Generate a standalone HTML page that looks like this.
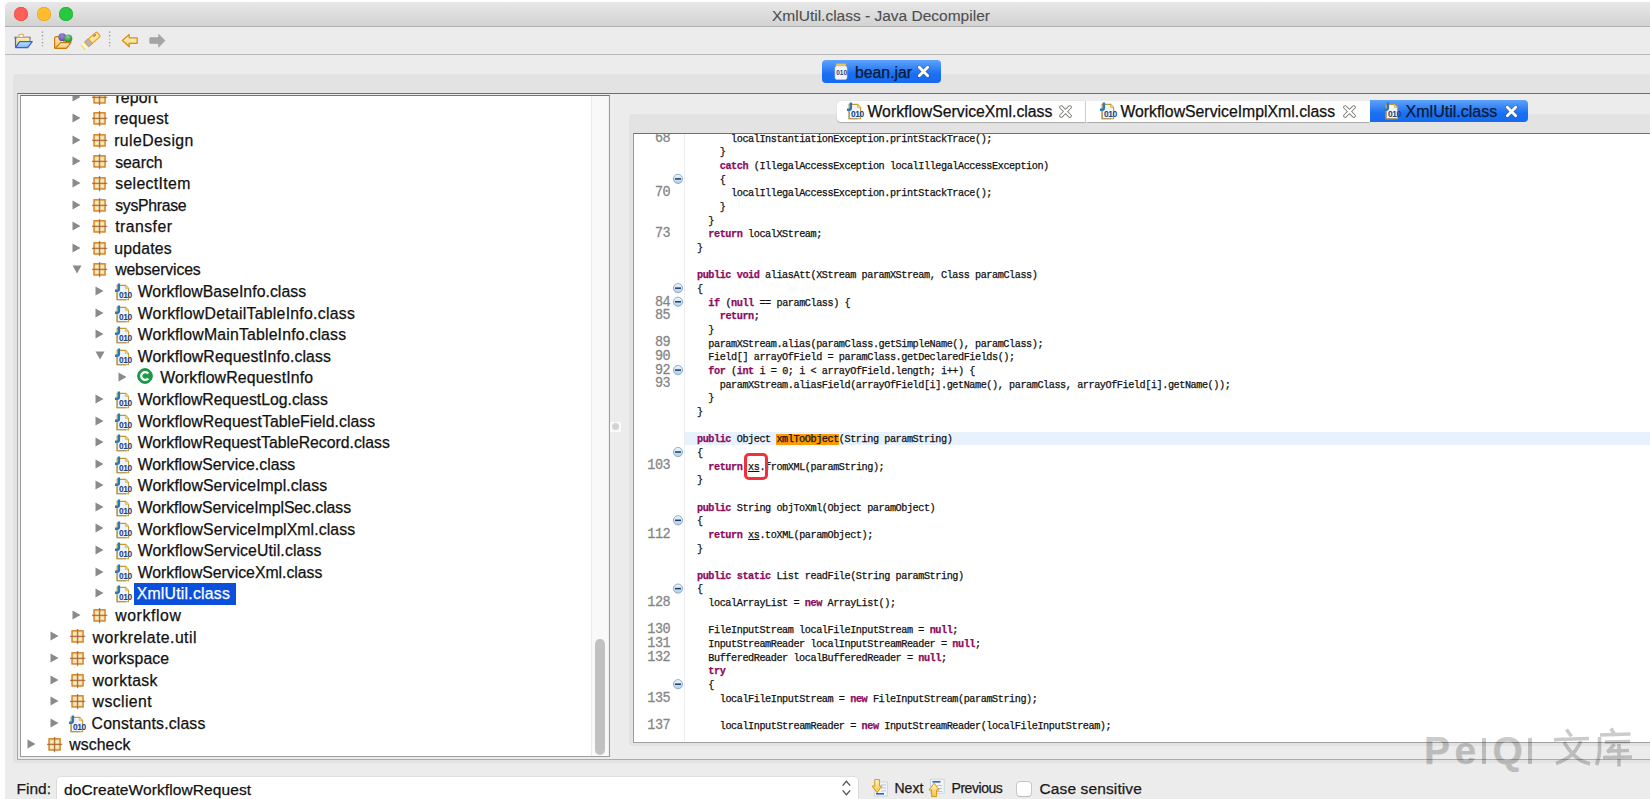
<!DOCTYPE html><html><head><meta charset="utf-8"><title>XmlUtil.class - Java Decompiler</title><style>
*{margin:0;padding:0;box-sizing:border-box}
html,body{width:1650px;height:799px;overflow:hidden;background:#fff}
body{position:relative;font-family:"Liberation Sans",sans-serif}
.ab{position:absolute}
.t{position:absolute;white-space:pre;line-height:1;-webkit-text-stroke:0.25px currentColor}

.cd{font-family:"Liberation Mono",monospace;font-size:10.2px;letter-spacing:-0.44px;color:#111}
.cd b{color:#8e0a60;font-weight:bold}
.cd u{text-decoration:underline}
.hl{background:#fe9a05}
.ln{font-family:"Liberation Mono",monospace;font-size:13.5px;letter-spacing:-0.55px;color:#858585;-webkit-text-stroke:0.25px #858585;transform:scaleY(1.1);transform-origin:50% 50%}
</style></head><body><svg width="0" height="0" style="position:absolute"><defs><linearGradient id="fg" x1="0" y1="0" x2="0" y2="1"><stop offset="0" stop-color="#f2f7fc"/><stop offset="1" stop-color="#aecde9"/></linearGradient></defs></svg><div class="ab" style="left:5px;top:2px;width:1700px;height:820px;background:#ececec;border-radius:5px 0 0 0"></div><div class="ab" style="left:5px;top:2px;width:1700px;height:25px;background:linear-gradient(#e8e8e8,#d2d2d2);border-radius:5px 0 0 0;border-bottom:1px solid #b0b0b0"></div><div class="ab" style="left:14px;top:7.3px;width:14px;height:14px;border-radius:50%;background:#fe5f57;box-shadow:inset 0 0 0 0.5px #e2463f"></div><div class="ab" style="left:36.5px;top:7.3px;width:14px;height:14px;border-radius:50%;background:#febc2e;box-shadow:inset 0 0 0 0.5px #e1a116"></div><div class="ab" style="left:59.400000000000006px;top:7.3px;width:14px;height:14px;border-radius:50%;background:#28c840;box-shadow:inset 0 0 0 0.5px #14ae2b"></div><div class="t" style="left:772px;top:7.5px;font-size:15.5px;color:#4d4d4d;-webkit-text-stroke:0.1px #4d4d4d">XmlUtil.class - Java Decompiler</div><div class="ab" style="left:5px;top:54px;width:1700px;height:1px;background:#b8b8b8"></div><svg class="ab" style="left:0;top:26px" width="180" height="28" viewBox="0 26 180 28">
<defs>
<linearGradient id="fy" x1="0" y1="0" x2="0" y2="1"><stop offset="0" stop-color="#fff3c4"/><stop offset="1" stop-color="#f5c550"/></linearGradient>
<linearGradient id="fb" x1="0" y1="0" x2="0" y2="1"><stop offset="0" stop-color="#b2ebff"/><stop offset="1" stop-color="#86b4f2"/></linearGradient>
<linearGradient id="fo" x1="0" y1="0" x2="0" y2="1"><stop offset="0" stop-color="#fff0b8"/><stop offset="1" stop-color="#f3c262"/></linearGradient>
<linearGradient id="ay" x1="0" y1="0" x2="0" y2="1"><stop offset="0" stop-color="#fffbe6"/><stop offset="1" stop-color="#f7cf62"/></linearGradient>
<radialGradient id="bp" cx="0.45" cy="0.35" r="0.7"><stop offset="0" stop-color="#9f8ad8"/><stop offset="1" stop-color="#5f45a8"/></radialGradient>
<radialGradient id="bg" cx="0.45" cy="0.3" r="0.7"><stop offset="0" stop-color="#8fd08a"/><stop offset="1" stop-color="#0f8a35"/></radialGradient>
<linearGradient id="fl" x1="0" y1="0" x2="1" y2="0"><stop offset="0" stop-color="#f7d040"/><stop offset="0.5" stop-color="#ffffff"/><stop offset="1" stop-color="#f4d040"/></linearGradient>
</defs>
<!-- open folder -->
<path d="M14.3 36.6 H30.8 V38.6 H14.3 Z" fill="#a48894"/>
<path d="M19.1 36.8 V35.2 Q19.1 34.3 20 34.3 H22.4 Q23.3 34.3 23.3 35.2 V36.8" fill="#fff" stroke="#dba55a" stroke-width="1.1"/>
<path d="M15.6 37.6 V46.8" fill="none" stroke="#4a63c8" stroke-width="1.4"/>
<path d="M29.9 37.6 V41.6" fill="none" stroke="#6f7fc8" stroke-width="1.2"/>
<path d="M16.6 37.8 H29.2 V41.6 H19.6 L16.4 45.6 Z" fill="url(#fy)"/>
<path d="M19.7 41.6 H32.2 L27.6 47.6 H15.6 Z" fill="url(#fb)" stroke="#3e5fcc" stroke-width="1.3" stroke-linejoin="round"/>
<!-- separator -->
<g fill="#8e8e8e"><rect x="41.8" y="31.5" width="1.4" height="1.2"/><rect x="41.8" y="35" width="1.4" height="1.2"/><rect x="41.8" y="38.5" width="1.4" height="1.2" opacity="0.6"/><rect x="41.8" y="42" width="1.4" height="1.2"/><rect x="41.8" y="45.2" width="1.4" height="1.2" opacity="0.7"/></g>
<g fill="#8e8e8e"><rect x="108.9" y="31.5" width="1.4" height="1.2"/><rect x="108.9" y="35" width="1.4" height="1.2"/><rect x="108.9" y="38.5" width="1.4" height="1.2" opacity="0.6"/><rect x="108.9" y="42" width="1.4" height="1.2"/><rect x="108.9" y="45.2" width="1.4" height="1.2" opacity="0.7"/></g>
<!-- folder with balls -->
<path d="M54.6 48.2 V38.5 Q54.6 36.6 56.5 36.6 H58.5 L60 38 H64 V42.5" fill="url(#fo)" stroke="#c9790e" stroke-width="1.2"/>
<circle cx="62.3" cy="37.2" r="3.9" fill="url(#bp)"/>
<circle cx="68.2" cy="38.6" r="4.1" fill="url(#bg)"/>
<path d="M60.6 42.6 H71 L66.3 48.4 H55 Z" fill="url(#fo)" stroke="#c9790e" stroke-width="1.2" stroke-linejoin="round"/>
<!-- flashlight -->
<g transform="translate(90.5 41) rotate(-41) scale(0.84 0.8) translate(-90.5 -41)">
<rect x="78.2" y="37" width="6.6" height="8" fill="url(#fl)"/>
<path d="M84.6 37 H90.3 V45 H84.6 Z" fill="#b9b2bc" stroke="#a08c6c" stroke-width="0.9"/>
<path d="M90.3 37.3 H101.5 Q103.2 37.3 103.2 39 V43 Q103.2 44.7 101.5 44.7 H90.3 Z" fill="#fbe596" stroke="#f0a018" stroke-width="1.5"/>
<circle cx="97.5" cy="39.2" r="0.85" fill="#2f5ab0"/><circle cx="99.3" cy="39.2" r="0.85" fill="#2f5ab0"/>
</g>
<!-- back arrow -->
<path d="M122.4 40.6 L129.2 34.6 V37.8 H137.2 V43.3 H129.2 V46.8 Z" fill="url(#ay)" stroke="#d88f10" stroke-width="1.3" stroke-linejoin="round"/>
<!-- forward arrow -->
<path d="M165 40.6 L158.6 34.2 V37.6 H151 Q149.6 37.6 149.6 39 V42.2 Q149.6 43.6 151 43.6 H158.6 V47.2 Z" fill="#a4a4a4" stroke="#a0a0a0" stroke-width="0.6" stroke-linejoin="round"/>
</svg><div class="ab" style="left:14px;top:74.2px;width:1700px;height:687.8px;background:#e3e3e3;border-radius:4px 4px 3px 3px;box-shadow:-0.5px 0 0 0 #d8d8d8, 0 0.5px 0 0 #d8d8d8"></div><div class="ab" style="left:17.4px;top:93px;width:1700px;height:666.5px;background:#ececec;border-top:1.3px solid #6e6e6e;border-left:1px solid #a8a8a8;border-bottom:1.5px solid #acacac"></div><div class="ab" style="left:822px;top:60px;width:119px;height:23px;border-radius:4px;background:linear-gradient(#5ea3fb,#1b6ff2 60%,#166af0)"></div><svg class="ab" style="left:834px;top:62px" width="14" height="19" viewBox="0 0 14 19">
<rect x="2" y="1.5" width="10" height="2.5" fill="#e8c860" stroke="#c8a040" stroke-width="0.6"/>
<rect x="1" y="4" width="12" height="13.5" rx="2" fill="#f4f6fb" stroke="#c9c9c9" stroke-width="0.6"/>
<text x="2.2" y="13.2" font-family="Liberation Sans" font-size="6.5" font-weight="bold" fill="#1f3f80">010</text>
</svg><div class="t" style="left:855px;top:64.5px;font-size:15.8px;color:#081a36">bean.jar</div><svg class="ab" style="left:917px;top:65px" width="13" height="13" viewBox="0 0 13 13"><path d="M2.3 2.3 L10.7 10.7 M10.7 2.3 L2.3 10.7" stroke="#3b4a66" stroke-width="4.1" stroke-linecap="round" opacity="0.5"/><path d="M2.3 2.3 L10.7 10.7 M10.7 2.3 L2.3 10.7" stroke="#fff" stroke-width="2.8" stroke-linecap="round"/></svg><div class="ab" style="left:20px;top:95px;width:590px;height:662.3px;background:#fff;border:1px solid #9c9c9c;border-top:1.3px solid #747474"></div><div class="ab" style="left:591px;top:96.3px;width:17.5px;height:660px;background:#f9f9f9;border-left:1px solid #ebebeb;border-right:1px solid #f0f0f0"></div><div class="ab" style="left:595px;top:639px;width:9.5px;height:116px;border-radius:5px;background:#c1c1c1"></div><div class="ab" style="left:21px;top:96px;width:570px;height:661px;overflow:hidden" id="tree"><svg class="ab" style="left:51.4px;top:-4.4px" width="9" height="10" viewBox="0 0 9 10"><path d="M0.5 0.5 L8.5 5 L0.5 9.5 Z" fill="#8a8a8a"/></svg><svg class="ab" style="left:71.4px;top:-6.4px" width="16" height="16" viewBox="0 0 16 16">
<rect x="2" y="1.8" width="11.1" height="11.2" fill="#f3d7a8" stroke="#d27a16" stroke-width="1.3"/>
<g fill="#fcefb6" opacity="0.95"><circle cx="4.9" cy="4.8" r="1.6"/><circle cx="10.2" cy="4.8" r="1.6"/><circle cx="4.9" cy="10" r="1.6"/><circle cx="10.2" cy="10" r="1.6"/></g>
<line x1="7.55" y1="0" x2="7.55" y2="15.2" stroke="#9a5a30" stroke-width="1.3" opacity="0.75"/>
<line x1="0" y1="7.4" x2="15.3" y2="7.4" stroke="#9a5a30" stroke-width="1.3" opacity="0.75"/>
</svg><div class="t" style="left:94.40px;top:-6.3px;font-size:15.8px;letter-spacing:0.200px;color:#111">report</div><svg class="ab" style="left:51.4px;top:17.2px" width="9" height="10" viewBox="0 0 9 10"><path d="M0.5 0.5 L8.5 5 L0.5 9.5 Z" fill="#8a8a8a"/></svg><svg class="ab" style="left:71.4px;top:15.2px" width="16" height="16" viewBox="0 0 16 16">
<rect x="2" y="1.8" width="11.1" height="11.2" fill="#f3d7a8" stroke="#d27a16" stroke-width="1.3"/>
<g fill="#fcefb6" opacity="0.95"><circle cx="4.9" cy="4.8" r="1.6"/><circle cx="10.2" cy="4.8" r="1.6"/><circle cx="4.9" cy="10" r="1.6"/><circle cx="10.2" cy="10" r="1.6"/></g>
<line x1="7.55" y1="0" x2="7.55" y2="15.2" stroke="#9a5a30" stroke-width="1.3" opacity="0.75"/>
<line x1="0" y1="7.4" x2="15.3" y2="7.4" stroke="#9a5a30" stroke-width="1.3" opacity="0.75"/>
</svg><div class="t" style="left:93.20px;top:15.3px;font-size:15.8px;letter-spacing:0.267px;color:#111">request</div><svg class="ab" style="left:51.4px;top:38.8px" width="9" height="10" viewBox="0 0 9 10"><path d="M0.5 0.5 L8.5 5 L0.5 9.5 Z" fill="#8a8a8a"/></svg><svg class="ab" style="left:71.4px;top:36.8px" width="16" height="16" viewBox="0 0 16 16">
<rect x="2" y="1.8" width="11.1" height="11.2" fill="#f3d7a8" stroke="#d27a16" stroke-width="1.3"/>
<g fill="#fcefb6" opacity="0.95"><circle cx="4.9" cy="4.8" r="1.6"/><circle cx="10.2" cy="4.8" r="1.6"/><circle cx="4.9" cy="10" r="1.6"/><circle cx="10.2" cy="10" r="1.6"/></g>
<line x1="7.55" y1="0" x2="7.55" y2="15.2" stroke="#9a5a30" stroke-width="1.3" opacity="0.75"/>
<line x1="0" y1="7.4" x2="15.3" y2="7.4" stroke="#9a5a30" stroke-width="1.3" opacity="0.75"/>
</svg><div class="t" style="left:93.20px;top:36.9px;font-size:15.8px;letter-spacing:0.400px;color:#111">ruleDesign</div><svg class="ab" style="left:51.4px;top:60.4px" width="9" height="10" viewBox="0 0 9 10"><path d="M0.5 0.5 L8.5 5 L0.5 9.5 Z" fill="#8a8a8a"/></svg><svg class="ab" style="left:71.4px;top:58.4px" width="16" height="16" viewBox="0 0 16 16">
<rect x="2" y="1.8" width="11.1" height="11.2" fill="#f3d7a8" stroke="#d27a16" stroke-width="1.3"/>
<g fill="#fcefb6" opacity="0.95"><circle cx="4.9" cy="4.8" r="1.6"/><circle cx="10.2" cy="4.8" r="1.6"/><circle cx="4.9" cy="10" r="1.6"/><circle cx="10.2" cy="10" r="1.6"/></g>
<line x1="7.55" y1="0" x2="7.55" y2="15.2" stroke="#9a5a30" stroke-width="1.3" opacity="0.75"/>
<line x1="0" y1="7.4" x2="15.3" y2="7.4" stroke="#9a5a30" stroke-width="1.3" opacity="0.75"/>
</svg><div class="t" style="left:94.20px;top:58.5px;font-size:15.8px;letter-spacing:0.000px;color:#111">search</div><svg class="ab" style="left:51.4px;top:82.0px" width="9" height="10" viewBox="0 0 9 10"><path d="M0.5 0.5 L8.5 5 L0.5 9.5 Z" fill="#8a8a8a"/></svg><svg class="ab" style="left:71.4px;top:80.0px" width="16" height="16" viewBox="0 0 16 16">
<rect x="2" y="1.8" width="11.1" height="11.2" fill="#f3d7a8" stroke="#d27a16" stroke-width="1.3"/>
<g fill="#fcefb6" opacity="0.95"><circle cx="4.9" cy="4.8" r="1.6"/><circle cx="10.2" cy="4.8" r="1.6"/><circle cx="4.9" cy="10" r="1.6"/><circle cx="10.2" cy="10" r="1.6"/></g>
<line x1="7.55" y1="0" x2="7.55" y2="15.2" stroke="#9a5a30" stroke-width="1.3" opacity="0.75"/>
<line x1="0" y1="7.4" x2="15.3" y2="7.4" stroke="#9a5a30" stroke-width="1.3" opacity="0.75"/>
</svg><div class="t" style="left:94.20px;top:80.1px;font-size:15.8px;letter-spacing:0.356px;color:#111">selectItem</div><svg class="ab" style="left:51.4px;top:103.6px" width="9" height="10" viewBox="0 0 9 10"><path d="M0.5 0.5 L8.5 5 L0.5 9.5 Z" fill="#8a8a8a"/></svg><svg class="ab" style="left:71.4px;top:101.6px" width="16" height="16" viewBox="0 0 16 16">
<rect x="2" y="1.8" width="11.1" height="11.2" fill="#f3d7a8" stroke="#d27a16" stroke-width="1.3"/>
<g fill="#fcefb6" opacity="0.95"><circle cx="4.9" cy="4.8" r="1.6"/><circle cx="10.2" cy="4.8" r="1.6"/><circle cx="4.9" cy="10" r="1.6"/><circle cx="10.2" cy="10" r="1.6"/></g>
<line x1="7.55" y1="0" x2="7.55" y2="15.2" stroke="#9a5a30" stroke-width="1.3" opacity="0.75"/>
<line x1="0" y1="7.4" x2="15.3" y2="7.4" stroke="#9a5a30" stroke-width="1.3" opacity="0.75"/>
</svg><div class="t" style="left:94.20px;top:101.7px;font-size:15.8px;letter-spacing:-0.300px;color:#111">sysPhrase</div><svg class="ab" style="left:51.4px;top:125.2px" width="9" height="10" viewBox="0 0 9 10"><path d="M0.5 0.5 L8.5 5 L0.5 9.5 Z" fill="#8a8a8a"/></svg><svg class="ab" style="left:71.4px;top:123.2px" width="16" height="16" viewBox="0 0 16 16">
<rect x="2" y="1.8" width="11.1" height="11.2" fill="#f3d7a8" stroke="#d27a16" stroke-width="1.3"/>
<g fill="#fcefb6" opacity="0.95"><circle cx="4.9" cy="4.8" r="1.6"/><circle cx="10.2" cy="4.8" r="1.6"/><circle cx="4.9" cy="10" r="1.6"/><circle cx="10.2" cy="10" r="1.6"/></g>
<line x1="7.55" y1="0" x2="7.55" y2="15.2" stroke="#9a5a30" stroke-width="1.3" opacity="0.75"/>
<line x1="0" y1="7.4" x2="15.3" y2="7.4" stroke="#9a5a30" stroke-width="1.3" opacity="0.75"/>
</svg><div class="t" style="left:94.20px;top:123.2px;font-size:15.8px;letter-spacing:0.457px;color:#111">transfer</div><svg class="ab" style="left:51.4px;top:146.7px" width="9" height="10" viewBox="0 0 9 10"><path d="M0.5 0.5 L8.5 5 L0.5 9.5 Z" fill="#8a8a8a"/></svg><svg class="ab" style="left:71.4px;top:144.7px" width="16" height="16" viewBox="0 0 16 16">
<rect x="2" y="1.8" width="11.1" height="11.2" fill="#f3d7a8" stroke="#d27a16" stroke-width="1.3"/>
<g fill="#fcefb6" opacity="0.95"><circle cx="4.9" cy="4.8" r="1.6"/><circle cx="10.2" cy="4.8" r="1.6"/><circle cx="4.9" cy="10" r="1.6"/><circle cx="10.2" cy="10" r="1.6"/></g>
<line x1="7.55" y1="0" x2="7.55" y2="15.2" stroke="#9a5a30" stroke-width="1.3" opacity="0.75"/>
<line x1="0" y1="7.4" x2="15.3" y2="7.4" stroke="#9a5a30" stroke-width="1.3" opacity="0.75"/>
</svg><div class="t" style="left:93.20px;top:144.8px;font-size:15.8px;letter-spacing:0.200px;color:#111">updates</div><svg class="ab" style="left:50.9px;top:168.8px" width="10" height="9" viewBox="0 0 10 9"><path d="M0.5 0.5 L9.5 0.5 L5 8.5 Z" fill="#8a8a8a"/></svg><svg class="ab" style="left:71.4px;top:166.3px" width="16" height="16" viewBox="0 0 16 16">
<rect x="2" y="1.8" width="11.1" height="11.2" fill="#f3d7a8" stroke="#d27a16" stroke-width="1.3"/>
<g fill="#fcefb6" opacity="0.95"><circle cx="4.9" cy="4.8" r="1.6"/><circle cx="10.2" cy="4.8" r="1.6"/><circle cx="4.9" cy="10" r="1.6"/><circle cx="10.2" cy="10" r="1.6"/></g>
<line x1="7.55" y1="0" x2="7.55" y2="15.2" stroke="#9a5a30" stroke-width="1.3" opacity="0.75"/>
<line x1="0" y1="7.4" x2="15.3" y2="7.4" stroke="#9a5a30" stroke-width="1.3" opacity="0.75"/>
</svg><div class="t" style="left:94.20px;top:166.4px;font-size:15.8px;letter-spacing:-0.140px;color:#111">webservices</div><svg class="ab" style="left:74.1px;top:189.9px" width="9" height="10" viewBox="0 0 9 10"><path d="M0.5 0.5 L8.5 5 L0.5 9.5 Z" fill="#8a8a8a"/></svg><svg class="ab" style="left:92.6px;top:187.0px" width="20" height="20" viewBox="0 0 20 20">
<path d="M3.1 2.4 H11.7 L14.6 5.4 V16.7 H3.1 Z" fill="#f1f4fb" stroke="#c49a2c" stroke-width="1.1"/>
<path d="M11.4 2.4 V5.6 H14.6" fill="#f2d68a" stroke="#d0a840" stroke-width="0.6"/>
<path d="M3.1 9 V16.7 H12" fill="none" stroke="#a89660" stroke-width="1.1"/>
<path d="M4.9 0.4 V5.9 Q4.9 7.7 3 7.7 H1" fill="none" stroke="#2a78b8" stroke-width="2.4"/>
<text x="5" y="15.4" font-family="Liberation Sans" font-size="8.4" font-weight="bold" fill="#1a4085" letter-spacing="-0.45">010</text>
</svg><div class="t" style="left:116.70px;top:188.0px;font-size:15.8px;letter-spacing:0.048px;color:#111">WorkflowBaseInfo.class</div><svg class="ab" style="left:74.1px;top:211.5px" width="9" height="10" viewBox="0 0 9 10"><path d="M0.5 0.5 L8.5 5 L0.5 9.5 Z" fill="#8a8a8a"/></svg><svg class="ab" style="left:92.6px;top:208.6px" width="20" height="20" viewBox="0 0 20 20">
<path d="M3.1 2.4 H11.7 L14.6 5.4 V16.7 H3.1 Z" fill="#f1f4fb" stroke="#c49a2c" stroke-width="1.1"/>
<path d="M11.4 2.4 V5.6 H14.6" fill="#f2d68a" stroke="#d0a840" stroke-width="0.6"/>
<path d="M3.1 9 V16.7 H12" fill="none" stroke="#a89660" stroke-width="1.1"/>
<path d="M4.9 0.4 V5.9 Q4.9 7.7 3 7.7 H1" fill="none" stroke="#2a78b8" stroke-width="2.4"/>
<text x="5" y="15.4" font-family="Liberation Sans" font-size="8.4" font-weight="bold" fill="#1a4085" letter-spacing="-0.45">010</text>
</svg><div class="t" style="left:116.70px;top:209.6px;font-size:15.8px;letter-spacing:0.271px;color:#111">WorkflowDetailTableInfo.class</div><svg class="ab" style="left:74.1px;top:233.1px" width="9" height="10" viewBox="0 0 9 10"><path d="M0.5 0.5 L8.5 5 L0.5 9.5 Z" fill="#8a8a8a"/></svg><svg class="ab" style="left:92.6px;top:230.2px" width="20" height="20" viewBox="0 0 20 20">
<path d="M3.1 2.4 H11.7 L14.6 5.4 V16.7 H3.1 Z" fill="#f1f4fb" stroke="#c49a2c" stroke-width="1.1"/>
<path d="M11.4 2.4 V5.6 H14.6" fill="#f2d68a" stroke="#d0a840" stroke-width="0.6"/>
<path d="M3.1 9 V16.7 H12" fill="none" stroke="#a89660" stroke-width="1.1"/>
<path d="M4.9 0.4 V5.9 Q4.9 7.7 3 7.7 H1" fill="none" stroke="#2a78b8" stroke-width="2.4"/>
<text x="5" y="15.4" font-family="Liberation Sans" font-size="8.4" font-weight="bold" fill="#1a4085" letter-spacing="-0.45">010</text>
</svg><div class="t" style="left:116.70px;top:231.2px;font-size:15.8px;letter-spacing:0.192px;color:#111">WorkflowMainTableInfo.class</div><svg class="ab" style="left:73.6px;top:255.2px" width="10" height="9" viewBox="0 0 10 9"><path d="M0.5 0.5 L9.5 0.5 L5 8.5 Z" fill="#8a8a8a"/></svg><svg class="ab" style="left:92.6px;top:251.8px" width="20" height="20" viewBox="0 0 20 20">
<path d="M3.1 2.4 H11.7 L14.6 5.4 V16.7 H3.1 Z" fill="#f1f4fb" stroke="#c49a2c" stroke-width="1.1"/>
<path d="M11.4 2.4 V5.6 H14.6" fill="#f2d68a" stroke="#d0a840" stroke-width="0.6"/>
<path d="M3.1 9 V16.7 H12" fill="none" stroke="#a89660" stroke-width="1.1"/>
<path d="M4.9 0.4 V5.9 Q4.9 7.7 3 7.7 H1" fill="none" stroke="#2a78b8" stroke-width="2.4"/>
<text x="5" y="15.4" font-family="Liberation Sans" font-size="8.4" font-weight="bold" fill="#1a4085" letter-spacing="-0.45">010</text>
</svg><div class="t" style="left:116.70px;top:252.8px;font-size:15.8px;letter-spacing:0.125px;color:#111">WorkflowRequestInfo.class</div><svg class="ab" style="left:96.8px;top:276.3px" width="9" height="10" viewBox="0 0 9 10"><path d="M0.5 0.5 L8.5 5 L0.5 9.5 Z" fill="#8a8a8a"/></svg><svg class="ab" style="left:115.8px;top:272.4px" width="16" height="16" viewBox="0 0 16 16">
<circle cx="8" cy="8" r="7.4" fill="#1e9a4a" stroke="#13803a" stroke-width="0.8"/>
<path d="M11.2 5.6 A3.9 3.9 0 1 0 11.2 10.4" fill="none" stroke="#f2fff4" stroke-width="2.4"/>
</svg><div class="t" style="left:139.20px;top:274.4px;font-size:15.8px;letter-spacing:0.167px;color:#111">WorkflowRequestInfo</div><svg class="ab" style="left:74.1px;top:297.9px" width="9" height="10" viewBox="0 0 9 10"><path d="M0.5 0.5 L8.5 5 L0.5 9.5 Z" fill="#8a8a8a"/></svg><svg class="ab" style="left:92.6px;top:295.0px" width="20" height="20" viewBox="0 0 20 20">
<path d="M3.1 2.4 H11.7 L14.6 5.4 V16.7 H3.1 Z" fill="#f1f4fb" stroke="#c49a2c" stroke-width="1.1"/>
<path d="M11.4 2.4 V5.6 H14.6" fill="#f2d68a" stroke="#d0a840" stroke-width="0.6"/>
<path d="M3.1 9 V16.7 H12" fill="none" stroke="#a89660" stroke-width="1.1"/>
<path d="M4.9 0.4 V5.9 Q4.9 7.7 3 7.7 H1" fill="none" stroke="#2a78b8" stroke-width="2.4"/>
<text x="5" y="15.4" font-family="Liberation Sans" font-size="8.4" font-weight="bold" fill="#1a4085" letter-spacing="-0.45">010</text>
</svg><div class="t" style="left:116.70px;top:296.0px;font-size:15.8px;letter-spacing:0.000px;color:#111">WorkflowRequestLog.class</div><svg class="ab" style="left:74.1px;top:319.5px" width="9" height="10" viewBox="0 0 9 10"><path d="M0.5 0.5 L8.5 5 L0.5 9.5 Z" fill="#8a8a8a"/></svg><svg class="ab" style="left:92.6px;top:316.6px" width="20" height="20" viewBox="0 0 20 20">
<path d="M3.1 2.4 H11.7 L14.6 5.4 V16.7 H3.1 Z" fill="#f1f4fb" stroke="#c49a2c" stroke-width="1.1"/>
<path d="M11.4 2.4 V5.6 H14.6" fill="#f2d68a" stroke="#d0a840" stroke-width="0.6"/>
<path d="M3.1 9 V16.7 H12" fill="none" stroke="#a89660" stroke-width="1.1"/>
<path d="M4.9 0.4 V5.9 Q4.9 7.7 3 7.7 H1" fill="none" stroke="#2a78b8" stroke-width="2.4"/>
<text x="5" y="15.4" font-family="Liberation Sans" font-size="8.4" font-weight="bold" fill="#1a4085" letter-spacing="-0.45">010</text>
</svg><div class="t" style="left:116.70px;top:317.6px;font-size:15.8px;letter-spacing:0.053px;color:#111">WorkflowRequestTableField.class</div><svg class="ab" style="left:74.1px;top:341.1px" width="9" height="10" viewBox="0 0 9 10"><path d="M0.5 0.5 L8.5 5 L0.5 9.5 Z" fill="#8a8a8a"/></svg><svg class="ab" style="left:92.6px;top:338.2px" width="20" height="20" viewBox="0 0 20 20">
<path d="M3.1 2.4 H11.7 L14.6 5.4 V16.7 H3.1 Z" fill="#f1f4fb" stroke="#c49a2c" stroke-width="1.1"/>
<path d="M11.4 2.4 V5.6 H14.6" fill="#f2d68a" stroke="#d0a840" stroke-width="0.6"/>
<path d="M3.1 9 V16.7 H12" fill="none" stroke="#a89660" stroke-width="1.1"/>
<path d="M4.9 0.4 V5.9 Q4.9 7.7 3 7.7 H1" fill="none" stroke="#2a78b8" stroke-width="2.4"/>
<text x="5" y="15.4" font-family="Liberation Sans" font-size="8.4" font-weight="bold" fill="#1a4085" letter-spacing="-0.45">010</text>
</svg><div class="t" style="left:116.70px;top:339.2px;font-size:15.8px;letter-spacing:-0.013px;color:#111">WorkflowRequestTableRecord.class</div><svg class="ab" style="left:74.1px;top:362.6px" width="9" height="10" viewBox="0 0 9 10"><path d="M0.5 0.5 L8.5 5 L0.5 9.5 Z" fill="#8a8a8a"/></svg><svg class="ab" style="left:92.6px;top:359.7px" width="20" height="20" viewBox="0 0 20 20">
<path d="M3.1 2.4 H11.7 L14.6 5.4 V16.7 H3.1 Z" fill="#f1f4fb" stroke="#c49a2c" stroke-width="1.1"/>
<path d="M11.4 2.4 V5.6 H14.6" fill="#f2d68a" stroke="#d0a840" stroke-width="0.6"/>
<path d="M3.1 9 V16.7 H12" fill="none" stroke="#a89660" stroke-width="1.1"/>
<path d="M4.9 0.4 V5.9 Q4.9 7.7 3 7.7 H1" fill="none" stroke="#2a78b8" stroke-width="2.4"/>
<text x="5" y="15.4" font-family="Liberation Sans" font-size="8.4" font-weight="bold" fill="#1a4085" letter-spacing="-0.45">010</text>
</svg><div class="t" style="left:116.70px;top:360.7px;font-size:15.8px;letter-spacing:-0.010px;color:#111">WorkflowService.class</div><svg class="ab" style="left:74.1px;top:384.2px" width="9" height="10" viewBox="0 0 9 10"><path d="M0.5 0.5 L8.5 5 L0.5 9.5 Z" fill="#8a8a8a"/></svg><svg class="ab" style="left:92.6px;top:381.3px" width="20" height="20" viewBox="0 0 20 20">
<path d="M3.1 2.4 H11.7 L14.6 5.4 V16.7 H3.1 Z" fill="#f1f4fb" stroke="#c49a2c" stroke-width="1.1"/>
<path d="M11.4 2.4 V5.6 H14.6" fill="#f2d68a" stroke="#d0a840" stroke-width="0.6"/>
<path d="M3.1 9 V16.7 H12" fill="none" stroke="#a89660" stroke-width="1.1"/>
<path d="M4.9 0.4 V5.9 Q4.9 7.7 3 7.7 H1" fill="none" stroke="#2a78b8" stroke-width="2.4"/>
<text x="5" y="15.4" font-family="Liberation Sans" font-size="8.4" font-weight="bold" fill="#1a4085" letter-spacing="-0.45">010</text>
</svg><div class="t" style="left:116.70px;top:382.3px;font-size:15.8px;letter-spacing:0.075px;color:#111">WorkflowServiceImpl.class</div><svg class="ab" style="left:74.1px;top:405.8px" width="9" height="10" viewBox="0 0 9 10"><path d="M0.5 0.5 L8.5 5 L0.5 9.5 Z" fill="#8a8a8a"/></svg><svg class="ab" style="left:92.6px;top:402.9px" width="20" height="20" viewBox="0 0 20 20">
<path d="M3.1 2.4 H11.7 L14.6 5.4 V16.7 H3.1 Z" fill="#f1f4fb" stroke="#c49a2c" stroke-width="1.1"/>
<path d="M11.4 2.4 V5.6 H14.6" fill="#f2d68a" stroke="#d0a840" stroke-width="0.6"/>
<path d="M3.1 9 V16.7 H12" fill="none" stroke="#a89660" stroke-width="1.1"/>
<path d="M4.9 0.4 V5.9 Q4.9 7.7 3 7.7 H1" fill="none" stroke="#2a78b8" stroke-width="2.4"/>
<text x="5" y="15.4" font-family="Liberation Sans" font-size="8.4" font-weight="bold" fill="#1a4085" letter-spacing="-0.45">010</text>
</svg><div class="t" style="left:116.70px;top:403.9px;font-size:15.8px;letter-spacing:-0.052px;color:#111">WorkflowServiceImplSec.class</div><svg class="ab" style="left:74.1px;top:427.4px" width="9" height="10" viewBox="0 0 9 10"><path d="M0.5 0.5 L8.5 5 L0.5 9.5 Z" fill="#8a8a8a"/></svg><svg class="ab" style="left:92.6px;top:424.5px" width="20" height="20" viewBox="0 0 20 20">
<path d="M3.1 2.4 H11.7 L14.6 5.4 V16.7 H3.1 Z" fill="#f1f4fb" stroke="#c49a2c" stroke-width="1.1"/>
<path d="M11.4 2.4 V5.6 H14.6" fill="#f2d68a" stroke="#d0a840" stroke-width="0.6"/>
<path d="M3.1 9 V16.7 H12" fill="none" stroke="#a89660" stroke-width="1.1"/>
<path d="M4.9 0.4 V5.9 Q4.9 7.7 3 7.7 H1" fill="none" stroke="#2a78b8" stroke-width="2.4"/>
<text x="5" y="15.4" font-family="Liberation Sans" font-size="8.4" font-weight="bold" fill="#1a4085" letter-spacing="-0.45">010</text>
</svg><div class="t" style="left:116.70px;top:425.5px;font-size:15.8px;letter-spacing:0.096px;color:#111">WorkflowServiceImplXml.class</div><svg class="ab" style="left:74.1px;top:449.0px" width="9" height="10" viewBox="0 0 9 10"><path d="M0.5 0.5 L8.5 5 L0.5 9.5 Z" fill="#8a8a8a"/></svg><svg class="ab" style="left:92.6px;top:446.1px" width="20" height="20" viewBox="0 0 20 20">
<path d="M3.1 2.4 H11.7 L14.6 5.4 V16.7 H3.1 Z" fill="#f1f4fb" stroke="#c49a2c" stroke-width="1.1"/>
<path d="M11.4 2.4 V5.6 H14.6" fill="#f2d68a" stroke="#d0a840" stroke-width="0.6"/>
<path d="M3.1 9 V16.7 H12" fill="none" stroke="#a89660" stroke-width="1.1"/>
<path d="M4.9 0.4 V5.9 Q4.9 7.7 3 7.7 H1" fill="none" stroke="#2a78b8" stroke-width="2.4"/>
<text x="5" y="15.4" font-family="Liberation Sans" font-size="8.4" font-weight="bold" fill="#1a4085" letter-spacing="-0.45">010</text>
</svg><div class="t" style="left:116.70px;top:447.1px;font-size:15.8px;letter-spacing:0.133px;color:#111">WorkflowServiceUtil.class</div><svg class="ab" style="left:74.1px;top:470.6px" width="9" height="10" viewBox="0 0 9 10"><path d="M0.5 0.5 L8.5 5 L0.5 9.5 Z" fill="#8a8a8a"/></svg><svg class="ab" style="left:92.6px;top:467.7px" width="20" height="20" viewBox="0 0 20 20">
<path d="M3.1 2.4 H11.7 L14.6 5.4 V16.7 H3.1 Z" fill="#f1f4fb" stroke="#c49a2c" stroke-width="1.1"/>
<path d="M11.4 2.4 V5.6 H14.6" fill="#f2d68a" stroke="#d0a840" stroke-width="0.6"/>
<path d="M3.1 9 V16.7 H12" fill="none" stroke="#a89660" stroke-width="1.1"/>
<path d="M4.9 0.4 V5.9 Q4.9 7.7 3 7.7 H1" fill="none" stroke="#2a78b8" stroke-width="2.4"/>
<text x="5" y="15.4" font-family="Liberation Sans" font-size="8.4" font-weight="bold" fill="#1a4085" letter-spacing="-0.45">010</text>
</svg><div class="t" style="left:116.70px;top:468.7px;font-size:15.8px;letter-spacing:-0.009px;color:#111">WorkflowServiceXml.class</div><svg class="ab" style="left:74.1px;top:492.2px" width="9" height="10" viewBox="0 0 9 10"><path d="M0.5 0.5 L8.5 5 L0.5 9.5 Z" fill="#8a8a8a"/></svg><svg class="ab" style="left:92.6px;top:489.3px" width="20" height="20" viewBox="0 0 20 20">
<path d="M3.1 2.4 H11.7 L14.6 5.4 V16.7 H3.1 Z" fill="#f1f4fb" stroke="#c49a2c" stroke-width="1.1"/>
<path d="M11.4 2.4 V5.6 H14.6" fill="#f2d68a" stroke="#d0a840" stroke-width="0.6"/>
<path d="M3.1 9 V16.7 H12" fill="none" stroke="#a89660" stroke-width="1.1"/>
<path d="M4.9 0.4 V5.9 Q4.9 7.7 3 7.7 H1" fill="none" stroke="#2a78b8" stroke-width="2.4"/>
<text x="5" y="15.4" font-family="Liberation Sans" font-size="8.4" font-weight="bold" fill="#1a4085" letter-spacing="-0.45">010</text>
</svg><div class="ab" style="left:112.7px;top:487.3px;width:102.4px;height:21.3px;background:#0b50dc"></div><div class="t" style="left:115.70px;top:490.3px;font-size:15.8px;letter-spacing:0.225px;color:#fff">XmlUtil.class</div><svg class="ab" style="left:51.4px;top:513.8px" width="9" height="10" viewBox="0 0 9 10"><path d="M0.5 0.5 L8.5 5 L0.5 9.5 Z" fill="#8a8a8a"/></svg><svg class="ab" style="left:71.4px;top:511.8px" width="16" height="16" viewBox="0 0 16 16">
<rect x="2" y="1.8" width="11.1" height="11.2" fill="#f3d7a8" stroke="#d27a16" stroke-width="1.3"/>
<g fill="#fcefb6" opacity="0.95"><circle cx="4.9" cy="4.8" r="1.6"/><circle cx="10.2" cy="4.8" r="1.6"/><circle cx="4.9" cy="10" r="1.6"/><circle cx="10.2" cy="10" r="1.6"/></g>
<line x1="7.55" y1="0" x2="7.55" y2="15.2" stroke="#9a5a30" stroke-width="1.3" opacity="0.75"/>
<line x1="0" y1="7.4" x2="15.3" y2="7.4" stroke="#9a5a30" stroke-width="1.3" opacity="0.75"/>
</svg><div class="t" style="left:94.20px;top:511.9px;font-size:15.8px;letter-spacing:0.600px;color:#111">workflow</div><svg class="ab" style="left:28.7px;top:535.4px" width="9" height="10" viewBox="0 0 9 10"><path d="M0.5 0.5 L8.5 5 L0.5 9.5 Z" fill="#8a8a8a"/></svg><svg class="ab" style="left:48.7px;top:533.4px" width="16" height="16" viewBox="0 0 16 16">
<rect x="2" y="1.8" width="11.1" height="11.2" fill="#f3d7a8" stroke="#d27a16" stroke-width="1.3"/>
<g fill="#fcefb6" opacity="0.95"><circle cx="4.9" cy="4.8" r="1.6"/><circle cx="10.2" cy="4.8" r="1.6"/><circle cx="4.9" cy="10" r="1.6"/><circle cx="10.2" cy="10" r="1.6"/></g>
<line x1="7.55" y1="0" x2="7.55" y2="15.2" stroke="#9a5a30" stroke-width="1.3" opacity="0.75"/>
<line x1="0" y1="7.4" x2="15.3" y2="7.4" stroke="#9a5a30" stroke-width="1.3" opacity="0.75"/>
</svg><div class="t" style="left:71.60px;top:533.5px;font-size:15.8px;letter-spacing:0.457px;color:#111">workrelate.util</div><svg class="ab" style="left:28.7px;top:557.0px" width="9" height="10" viewBox="0 0 9 10"><path d="M0.5 0.5 L8.5 5 L0.5 9.5 Z" fill="#8a8a8a"/></svg><svg class="ab" style="left:48.7px;top:555.0px" width="16" height="16" viewBox="0 0 16 16">
<rect x="2" y="1.8" width="11.1" height="11.2" fill="#f3d7a8" stroke="#d27a16" stroke-width="1.3"/>
<g fill="#fcefb6" opacity="0.95"><circle cx="4.9" cy="4.8" r="1.6"/><circle cx="10.2" cy="4.8" r="1.6"/><circle cx="4.9" cy="10" r="1.6"/><circle cx="10.2" cy="10" r="1.6"/></g>
<line x1="7.55" y1="0" x2="7.55" y2="15.2" stroke="#9a5a30" stroke-width="1.3" opacity="0.75"/>
<line x1="0" y1="7.4" x2="15.3" y2="7.4" stroke="#9a5a30" stroke-width="1.3" opacity="0.75"/>
</svg><div class="t" style="left:71.60px;top:555.1px;font-size:15.8px;letter-spacing:0.125px;color:#111">workspace</div><svg class="ab" style="left:28.7px;top:578.5px" width="9" height="10" viewBox="0 0 9 10"><path d="M0.5 0.5 L8.5 5 L0.5 9.5 Z" fill="#8a8a8a"/></svg><svg class="ab" style="left:48.7px;top:576.5px" width="16" height="16" viewBox="0 0 16 16">
<rect x="2" y="1.8" width="11.1" height="11.2" fill="#f3d7a8" stroke="#d27a16" stroke-width="1.3"/>
<g fill="#fcefb6" opacity="0.95"><circle cx="4.9" cy="4.8" r="1.6"/><circle cx="10.2" cy="4.8" r="1.6"/><circle cx="4.9" cy="10" r="1.6"/><circle cx="10.2" cy="10" r="1.6"/></g>
<line x1="7.55" y1="0" x2="7.55" y2="15.2" stroke="#9a5a30" stroke-width="1.3" opacity="0.75"/>
<line x1="0" y1="7.4" x2="15.3" y2="7.4" stroke="#9a5a30" stroke-width="1.3" opacity="0.75"/>
</svg><div class="t" style="left:71.60px;top:576.6px;font-size:15.8px;letter-spacing:0.371px;color:#111">worktask</div><svg class="ab" style="left:28.7px;top:600.1px" width="9" height="10" viewBox="0 0 9 10"><path d="M0.5 0.5 L8.5 5 L0.5 9.5 Z" fill="#8a8a8a"/></svg><svg class="ab" style="left:48.7px;top:598.1px" width="16" height="16" viewBox="0 0 16 16">
<rect x="2" y="1.8" width="11.1" height="11.2" fill="#f3d7a8" stroke="#d27a16" stroke-width="1.3"/>
<g fill="#fcefb6" opacity="0.95"><circle cx="4.9" cy="4.8" r="1.6"/><circle cx="10.2" cy="4.8" r="1.6"/><circle cx="4.9" cy="10" r="1.6"/><circle cx="10.2" cy="10" r="1.6"/></g>
<line x1="7.55" y1="0" x2="7.55" y2="15.2" stroke="#9a5a30" stroke-width="1.3" opacity="0.75"/>
<line x1="0" y1="7.4" x2="15.3" y2="7.4" stroke="#9a5a30" stroke-width="1.3" opacity="0.75"/>
</svg><div class="t" style="left:71.60px;top:598.2px;font-size:15.8px;letter-spacing:0.400px;color:#111">wsclient</div><svg class="ab" style="left:28.7px;top:621.7px" width="9" height="10" viewBox="0 0 9 10"><path d="M0.5 0.5 L8.5 5 L0.5 9.5 Z" fill="#8a8a8a"/></svg><svg class="ab" style="left:47.2px;top:618.8px" width="20" height="20" viewBox="0 0 20 20">
<path d="M3.1 2.4 H11.7 L14.6 5.4 V16.7 H3.1 Z" fill="#f1f4fb" stroke="#c49a2c" stroke-width="1.1"/>
<path d="M11.4 2.4 V5.6 H14.6" fill="#f2d68a" stroke="#d0a840" stroke-width="0.6"/>
<path d="M3.1 9 V16.7 H12" fill="none" stroke="#a89660" stroke-width="1.1"/>
<path d="M4.9 0.4 V5.9 Q4.9 7.7 3 7.7 H1" fill="none" stroke="#2a78b8" stroke-width="2.4"/>
<text x="5" y="15.4" font-family="Liberation Sans" font-size="8.4" font-weight="bold" fill="#1a4085" letter-spacing="-0.45">010</text>
</svg><div class="t" style="left:70.60px;top:619.8px;font-size:15.8px;letter-spacing:0.157px;color:#111">Constants.class</div><svg class="ab" style="left:6.0px;top:643.3px" width="9" height="10" viewBox="0 0 9 10"><path d="M0.5 0.5 L8.5 5 L0.5 9.5 Z" fill="#8a8a8a"/></svg><svg class="ab" style="left:26.0px;top:641.3px" width="16" height="16" viewBox="0 0 16 16">
<rect x="2" y="1.8" width="11.1" height="11.2" fill="#f3d7a8" stroke="#d27a16" stroke-width="1.3"/>
<g fill="#fcefb6" opacity="0.95"><circle cx="4.9" cy="4.8" r="1.6"/><circle cx="10.2" cy="4.8" r="1.6"/><circle cx="4.9" cy="10" r="1.6"/><circle cx="10.2" cy="10" r="1.6"/></g>
<line x1="7.55" y1="0" x2="7.55" y2="15.2" stroke="#9a5a30" stroke-width="1.3" opacity="0.75"/>
<line x1="0" y1="7.4" x2="15.3" y2="7.4" stroke="#9a5a30" stroke-width="1.3" opacity="0.75"/>
</svg><div class="t" style="left:48.20px;top:641.4px;font-size:15.8px;letter-spacing:0.100px;color:#111">wscheck</div></div><div class="ab" style="left:610.3px;top:421.6px;width:10.5px;height:10.8px;background:#fafafa"></div><div class="ab" style="left:611.9px;top:423.4px;width:7px;height:7px;border-radius:50%;background:#d3d3d3"></div><div class="ab" style="left:630px;top:113.6px;width:1100px;height:631.7px;background:#e3e3e3;border-radius:4px 0 0 3px;box-shadow:-0.5px 0 0 0 #d8d8d8, 0 0.5px 0 0 #d8d8d8"></div><div class="ab" style="left:633px;top:133px;width:1100px;height:609.8px;background:#fff;border:1px solid #9a9a9a;border-top:1.3px solid #707070;border-bottom:1.4px solid #a0a0a0;border-right:none"></div><div class="ab" style="left:837px;top:100.8px;width:248px;height:21.4px;background:#fff;border-radius:4px 0 0 4px;box-shadow:0 0.5px 1px rgba(0,0,0,0.25)"></div><div class="ab" style="left:1085px;top:100.8px;width:285px;height:21.4px;background:#fff;border-left:1px solid #d0d0d0;box-shadow:0 0.5px 1px rgba(0,0,0,0.25)"></div><div class="ab" style="left:1370px;top:100px;width:157.5px;height:22.3px;background:linear-gradient(#5ea3fb,#1b6ff2 60%,#166af0);border-radius:0 4px 4px 0"></div><svg class="ab" style="left:845.7px;top:102px" width="20" height="20" viewBox="0 0 20 20">
<path d="M3.1 2.4 H11.7 L14.6 5.4 V16.7 H3.1 Z" fill="#f1f4fb" stroke="#c49a2c" stroke-width="1.1"/>
<path d="M11.4 2.4 V5.6 H14.6" fill="#f2d68a" stroke="#d0a840" stroke-width="0.6"/>
<path d="M3.1 9 V16.7 H12" fill="none" stroke="#a89660" stroke-width="1.1"/>
<path d="M4.9 0.4 V5.9 Q4.9 7.7 3 7.7 H1" fill="none" stroke="#2a78b8" stroke-width="2.4"/>
<text x="5" y="15.4" font-family="Liberation Sans" font-size="8.4" font-weight="bold" fill="#1a4085" letter-spacing="-0.45">010</text>
</svg><div class="t" style="left:867.5px;top:104px;font-size:15.8px;color:#111">WorkflowServiceXml.class</div><svg class="ab" style="left:1098.7px;top:102px" width="20" height="20" viewBox="0 0 20 20">
<path d="M3.1 2.4 H11.7 L14.6 5.4 V16.7 H3.1 Z" fill="#f1f4fb" stroke="#c49a2c" stroke-width="1.1"/>
<path d="M11.4 2.4 V5.6 H14.6" fill="#f2d68a" stroke="#d0a840" stroke-width="0.6"/>
<path d="M3.1 9 V16.7 H12" fill="none" stroke="#a89660" stroke-width="1.1"/>
<path d="M4.9 0.4 V5.9 Q4.9 7.7 3 7.7 H1" fill="none" stroke="#2a78b8" stroke-width="2.4"/>
<text x="5" y="15.4" font-family="Liberation Sans" font-size="8.4" font-weight="bold" fill="#1a4085" letter-spacing="-0.45">010</text>
</svg><div class="t" style="left:1120.4px;top:104px;font-size:15.8px;color:#111">WorkflowServiceImplXml.class</div><svg class="ab" style="left:1382.8px;top:102px" width="20" height="20" viewBox="0 0 20 20">
<path d="M3.1 2.4 H11.7 L14.6 5.4 V16.7 H3.1 Z" fill="#f1f4fb" stroke="#c49a2c" stroke-width="1.1"/>
<path d="M11.4 2.4 V5.6 H14.6" fill="#f2d68a" stroke="#d0a840" stroke-width="0.6"/>
<path d="M3.1 9 V16.7 H12" fill="none" stroke="#a89660" stroke-width="1.1"/>
<path d="M4.9 0.4 V5.9 Q4.9 7.7 3 7.7 H1" fill="none" stroke="#2a78b8" stroke-width="2.4"/>
<text x="5" y="15.4" font-family="Liberation Sans" font-size="8.4" font-weight="bold" fill="#1a4085" letter-spacing="-0.45">010</text>
</svg><div class="t" style="left:1405.6px;top:104px;font-size:16px;color:#081a36">XmlUtil.class</div><svg class="ab" style="left:1058.7px;top:104.5px" width="13" height="13" viewBox="0 0 13 13"><path d="M2.2 2.2 L10.8 10.8 M10.8 2.2 L2.2 10.8" stroke="#74746c" stroke-width="3.9" stroke-linecap="round"/><path d="M2.2 2.2 L10.8 10.8 M10.8 2.2 L2.2 10.8" stroke="#fff" stroke-width="2.3" stroke-linecap="round"/></svg><svg class="ab" style="left:1343.2px;top:104.5px" width="13" height="13" viewBox="0 0 13 13"><path d="M2.2 2.2 L10.8 10.8 M10.8 2.2 L2.2 10.8" stroke="#74746c" stroke-width="3.9" stroke-linecap="round"/><path d="M2.2 2.2 L10.8 10.8 M10.8 2.2 L2.2 10.8" stroke="#fff" stroke-width="2.3" stroke-linecap="round"/></svg><svg class="ab" style="left:1504.8px;top:104.6px" width="13" height="13" viewBox="0 0 13 13"><path d="M2.3 2.3 L10.7 10.7 M10.7 2.3 L2.3 10.7" stroke="#3b4a66" stroke-width="4.1" stroke-linecap="round" opacity="0.5"/><path d="M2.3 2.3 L10.7 10.7 M10.7 2.3 L2.3 10.7" stroke="#fff" stroke-width="2.8" stroke-linecap="round"/></svg><div class="ab" style="left:634.3px;top:134.3px;width:1020px;height:607px;overflow:hidden;background:#fff" id="code"><div class="ab" style="left:50.2px;top:0;width:1px;height:620px;background:#ececec"></div><div class="ab" style="left:51.2px;top:298.1px;width:1000px;height:13px;background:#e8f2fe"></div><div class="t cd" style="left:96.78px;top:0.50px">localInstantiationException.printStackTrace();</div><div class="t ln" style="right:984.3px;top:-2.67px">68</div><div class="t cd" style="left:85.42px;top:14.16px">}</div><div class="t cd" style="left:85.42px;top:27.81px"><b>catch</b> (IllegalAccessException localIllegalAccessException)</div><div class="t cd" style="left:85.42px;top:41.47px">{</div><div class="t cd" style="left:96.78px;top:55.13px">localIllegalAccessException.printStackTrace();</div><div class="t ln" style="right:984.3px;top:51.96px">70</div><div class="t cd" style="left:85.42px;top:68.78px">}</div><div class="t cd" style="left:74.06px;top:82.44px">}</div><div class="t cd" style="left:74.06px;top:96.10px"><b>return</b> localXStream;</div><div class="t ln" style="right:984.3px;top:92.93px">73</div><div class="t cd" style="left:62.70px;top:109.76px">}</div><div class="t cd" style="left:62.70px;top:137.07px"><b>public</b> <b>void</b> aliasAtt(XStream paramXStream, Class paramClass)</div><div class="t cd" style="left:62.70px;top:150.73px">{</div><div class="t cd" style="left:74.06px;top:164.38px"><b>if</b> (<b>null</b> == paramClass) {</div><div class="t ln" style="right:984.3px;top:161.21px">84</div><div class="t cd" style="left:85.42px;top:178.04px"><b>return</b>;</div><div class="t ln" style="right:984.3px;top:174.87px">85</div><div class="t cd" style="left:74.06px;top:191.70px">}</div><div class="t cd" style="left:74.06px;top:205.35px">paramXStream.alias(paramClass.getSimpleName(), paramClass);</div><div class="t ln" style="right:984.3px;top:202.18px">89</div><div class="t cd" style="left:74.06px;top:219.01px">Field[] arrayOfField = paramClass.getDeclaredFields();</div><div class="t ln" style="right:984.3px;top:215.84px">90</div><div class="t cd" style="left:74.06px;top:232.67px"><b>for</b> (<b>int</b> i = 0; i &lt; arrayOfField.length; i++) {</div><div class="t ln" style="right:984.3px;top:229.50px">92</div><div class="t cd" style="left:85.42px;top:246.33px">paramXStream.aliasField(arrayOfField[i].getName(), paramClass, arrayOfField[i].getName());</div><div class="t ln" style="right:984.3px;top:243.15px">93</div><div class="t cd" style="left:74.06px;top:259.98px">}</div><div class="t cd" style="left:62.70px;top:273.64px">}</div><div class="t cd" style="left:62.70px;top:300.95px"><b>public</b> Object <span class="hl">xmlToObject</span>(String paramString)</div><div class="t cd" style="left:62.70px;top:314.61px">{</div><div class="t cd" style="left:74.06px;top:328.27px"><b>return</b> <u>xs</u>.fromXML(paramString);</div><div class="t ln" style="right:984.3px;top:325.10px">103</div><div class="t cd" style="left:62.70px;top:341.92px">}</div><div class="t cd" style="left:62.70px;top:369.24px"><b>public</b> String objToXml(Object paramObject)</div><div class="t cd" style="left:62.70px;top:382.90px">{</div><div class="t cd" style="left:74.06px;top:396.55px"><b>return</b> <u>xs</u>.toXML(paramObject);</div><div class="t ln" style="right:984.3px;top:393.38px">112</div><div class="t cd" style="left:62.70px;top:410.21px">}</div><div class="t cd" style="left:62.70px;top:437.52px"><b>public</b> <b>static</b> List readFile(String paramString)</div><div class="t cd" style="left:62.70px;top:451.18px">{</div><div class="t cd" style="left:74.06px;top:464.84px">localArrayList = <b>new</b> ArrayList();</div><div class="t ln" style="right:984.3px;top:461.67px">128</div><div class="t cd" style="left:74.06px;top:492.15px">FileInputStream localFileInputStream = <b>null</b>;</div><div class="t ln" style="right:984.3px;top:488.98px">130</div><div class="t cd" style="left:74.06px;top:505.81px">InputStreamReader localInputStreamReader = <b>null</b>;</div><div class="t ln" style="right:984.3px;top:502.64px">131</div><div class="t cd" style="left:74.06px;top:519.47px">BufferedReader localBufferedReader = <b>null</b>;</div><div class="t ln" style="right:984.3px;top:516.29px">132</div><div class="t cd" style="left:74.06px;top:533.12px"><b>try</b></div><div class="t cd" style="left:74.06px;top:546.78px">{</div><div class="t cd" style="left:85.42px;top:560.44px">localFileInputStream = <b>new</b> FileInputStream(paramString);</div><div class="t ln" style="right:984.3px;top:557.27px">135</div><div class="t cd" style="left:85.42px;top:587.75px">localInputStreamReader = <b>new</b> InputStreamReader(localFileInputStream);</div><div class="t ln" style="right:984.3px;top:584.58px">137</div><svg class="ab" style="left:-634.3px;top:-134.3px" width="700" height="800" viewBox="0 0 700 800"><circle cx="678.0" cy="178.90" r="4.6" fill="url(#fg)" stroke="#86a6c6" stroke-width="0.9"/><rect x="675" y="178.15" width="6" height="1.5" fill="#1f3b5e"/><circle cx="678.0" cy="288.16" r="4.6" fill="url(#fg)" stroke="#86a6c6" stroke-width="0.9"/><rect x="675" y="287.41" width="6" height="1.5" fill="#1f3b5e"/><circle cx="678.0" cy="301.81" r="4.6" fill="url(#fg)" stroke="#86a6c6" stroke-width="0.9"/><rect x="675" y="301.06" width="6" height="1.5" fill="#1f3b5e"/><circle cx="678.0" cy="370.10" r="4.6" fill="url(#fg)" stroke="#86a6c6" stroke-width="0.9"/><rect x="675" y="369.35" width="6" height="1.5" fill="#1f3b5e"/><circle cx="678.0" cy="452.04" r="4.6" fill="url(#fg)" stroke="#86a6c6" stroke-width="0.9"/><rect x="675" y="451.29" width="6" height="1.5" fill="#1f3b5e"/><circle cx="678.0" cy="520.32" r="4.6" fill="url(#fg)" stroke="#86a6c6" stroke-width="0.9"/><rect x="675" y="519.57" width="6" height="1.5" fill="#1f3b5e"/><circle cx="678.0" cy="588.61" r="4.6" fill="url(#fg)" stroke="#86a6c6" stroke-width="0.9"/><rect x="675" y="587.86" width="6" height="1.5" fill="#1f3b5e"/><circle cx="678.0" cy="684.21" r="4.6" fill="url(#fg)" stroke="#86a6c6" stroke-width="0.9"/><rect x="675" y="683.46" width="6" height="1.5" fill="#1f3b5e"/></svg></div><div class="ab" style="left:743.5px;top:453.3px;width:24.5px;height:26.7px;border:3px solid #f0303a;border-radius:5px"></div><div class="t" style="left:16.5px;top:781px;font-size:15.5px;color:#1a1a1a">Find:</div><div class="ab" style="left:57px;top:776.5px;width:801px;height:30px;background:#fff;border-radius:4px;box-shadow:0 0 0 0.6px #cfcfcf, 0 1px 1px rgba(0,0,0,0.08)"></div><div class="t" style="left:64px;top:781.5px;font-size:15.5px;letter-spacing:0.1px;color:#111">doCreateWorkflowRequest</div><svg class="ab" style="left:841px;top:778px" width="12" height="20" viewBox="0 0 12 20"><path d="M1.6 7.6 L5.4 3.4 L9.2 7.6 M1.6 12.4 L5.4 16.6 L9.2 12.4" fill="none" stroke="#575757" stroke-width="1.4"/></svg><svg class="ab" style="left:860px;top:772px" width="100" height="27" viewBox="860 772 100 27">
<defs><linearGradient id="ar" x1="0" y1="0" x2="0" y2="1"><stop offset="0" stop-color="#fff6c8"/><stop offset="1" stop-color="#f7c437"/></linearGradient></defs>
<rect x="874.3" y="782" width="13.2" height="14" fill="#f2f6fb" stroke="#c3d0e0" stroke-width="0.8"/>
<g fill="#a9c0de"><rect x="881" y="784.5" width="5" height="0.9"/><rect x="881" y="787.5" width="5" height="0.9"/><rect x="881" y="790.5" width="5" height="0.9"/></g>
<rect x="876" y="793" width="8" height="1.6" fill="#2f62b8"/>
<path d="M874.8 779.6 H879.4 V786 H882 L877.1 792.8 L872.2 786 H874.8 Z" fill="url(#ar)" stroke="#d99418" stroke-width="1" stroke-linejoin="round"/>
<rect x="930.4" y="779.2" width="13.8" height="14" fill="#f2f6fb" stroke="#c3d0e0" stroke-width="0.8"/>
<rect x="932.5" y="781" width="8" height="1.6" fill="#2f62b8"/>
<g fill="#a9c0de"><rect x="937" y="785" width="5" height="0.9"/><rect x="937" y="788" width="5" height="0.9"/><rect x="937" y="791" width="5" height="0.9"/></g>
<path d="M934.1 783.2 L939.2 790 H936.6 V796.6 H931.6 V790 H929 Z" fill="url(#ar)" stroke="#d99418" stroke-width="1" stroke-linejoin="round"/>
</svg><div class="t" style="left:894.5px;top:780.5px;font-size:14px;color:#1a1a1a">Next</div><div class="t" style="left:951.5px;top:780.5px;font-size:14px;letter-spacing:-0.45px;color:#1a1a1a">Previous</div><div class="ab" style="left:1017px;top:781.8px;width:14.3px;height:14.3px;background:#fff;border-radius:3px;box-shadow:0 0 0 0.7px #b8b8b8, 0 0.5px 1px rgba(0,0,0,0.15)"></div><div class="t" style="left:1039.5px;top:781px;font-size:15.5px;letter-spacing:0.12px;color:#1a1a1a">Case sensitive</div><div class="ab" style="left:0;top:0;width:1650px;height:799px;opacity:0.2"><div class="t" style="left:1424px;top:730.8px;font-size:39px;font-weight:bold;color:#000;">P</div><div class="t" style="left:1454.4px;top:730.8px;font-size:39px;font-weight:bold;color:#000;">e</div><div class="t" style="left:1492.5px;top:730.8px;font-size:39px;font-weight:bold;color:#000;">Q</div><div class="ab" style="left:1481.5px;top:738.4px;width:4.4px;height:25.4px;background:#000"></div><div class="ab" style="left:1528px;top:738.4px;width:4.4px;height:25.4px;background:#000"></div><svg class="ab" style="left:1540px;top:720px" width="110" height="60" viewBox="1540 720 110 60">
<g fill="none" stroke="#000" stroke-width="3.6" stroke-linecap="butt" stroke-linejoin="round">
<path d="M1566.5 729.5 L1571.5 736.5"/>
<path d="M1554 740 Q1560 739 1572 739 L1589 738.5"/>
<path d="M1581 741 Q1576 752 1569 757 Q1563 761 1556 763.5"/>
<path d="M1564 742 Q1570 752 1576 757 Q1582 762 1590 764"/>
<path d="M1611 728.5 L1615 735.5"/>
<path d="M1600 735 L1630.5 734"/>
<path d="M1599.5 737 L1599.5 752 Q1599 759 1596.5 765"/>
<path d="M1605 742 L1630 741.5"/>
<path d="M1614.5 744 L1607.5 752.5"/>
<path d="M1607 751 L1629 750.5"/>
<path d="M1619 744 L1619 766.5"/>
<path d="M1603 757.5 L1632 757"/>
</g></svg></div></body></html>
